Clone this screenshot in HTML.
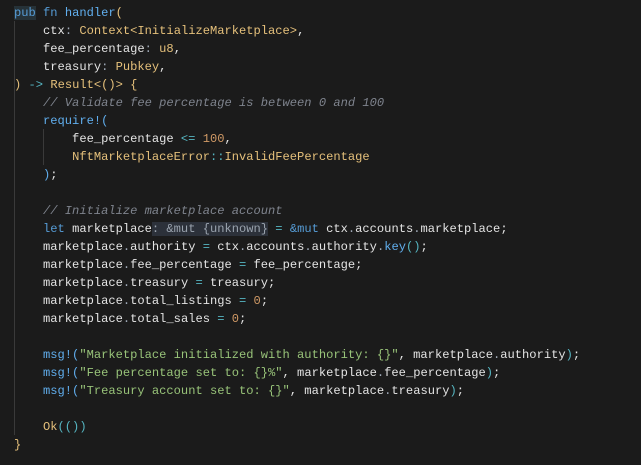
<!DOCTYPE html>
<html><head><meta charset="utf-8"><style>
html,body{margin:0;padding:0;background:#1b1b1b;width:641px;height:465px;overflow:hidden}
#code{position:absolute;left:14px;top:4px;font-family:"Liberation Mono",monospace;font-size:12.1px;color:#e4e4e4}
#code div{height:18px;line-height:18px;white-space:pre}
.k{color:#569cd6}.f{color:#61afef}.t{color:#e5c07b}.c{color:#7f848e;font-style:italic}
.s{color:#98c379}.n{color:#d19a66}.o{color:#56b6c2}.m{color:#61afef}.d{color:#a0aab8}
.h{background:#2c313a;color:#9aa3ae}.g{position:absolute;width:1px;background:#3a3a3a}
.pb{background:#263238}
</style></head><body>
<div class="g" style="left:14px;top:21px;height:414px"></div>
<div class="g" style="left:43px;top:129px;height:36px"></div>
<div id="code">
<div><span class="k pb">pub</span> <span class="k">fn</span> <span class="f">handler</span><span class="t">(</span></div>
<div>    ctx<span class="d">:</span> <span class="t">Context&lt;InitializeMarketplace&gt;</span>,</div>
<div>    fee_percentage<span class="d">:</span> <span class="t">u8</span>,</div>
<div>    treasury<span class="d">:</span> <span class="t">Pubkey</span>,</div>
<div><span class="t">)</span> <span class="o">-&gt;</span> <span class="t">Result&lt;()&gt; {</span></div>
<div>    <span class="c">// Validate fee percentage is between 0 and 100</span></div>
<div>    <span class="m">require!(</span></div>
<div>        fee_percentage <span class="o">&lt;=</span> <span class="n">100</span>,</div>
<div>        <span class="t">NftMarketplaceError</span><span class="o">::</span><span class="t">InvalidFeePercentage</span></div>
<div>    <span class="m">)</span>;</div>
<div> </div>
<div>    <span class="c">// Initialize marketplace account</span></div>
<div>    <span class="k">let</span> marketplace<span class="h">: &amp;mut {unknown}</span> <span class="o">=</span> <span class="k">&amp;mut</span> ctx<span class="d">.</span>accounts<span class="d">.</span>marketplace;</div>
<div>    marketplace<span class="d">.</span>authority <span class="o">=</span> ctx<span class="d">.</span>accounts<span class="d">.</span>authority<span class="d">.</span><span class="f">key</span><span class="o">()</span>;</div>
<div>    marketplace<span class="d">.</span>fee_percentage <span class="o">=</span> fee_percentage;</div>
<div>    marketplace<span class="d">.</span>treasury <span class="o">=</span> treasury;</div>
<div>    marketplace<span class="d">.</span>total_listings <span class="o">=</span> <span class="n">0</span>;</div>
<div>    marketplace<span class="d">.</span>total_sales <span class="o">=</span> <span class="n">0</span>;</div>
<div> </div>
<div>    <span class="m">msg!(</span><span class="s">"Marketplace initialized with authority: {}"</span>, marketplace<span class="d">.</span>authority<span class="o">)</span>;</div>
<div>    <span class="m">msg!(</span><span class="s">"Fee percentage set to: {}%"</span>, marketplace<span class="d">.</span>fee_percentage<span class="o">)</span>;</div>
<div>    <span class="m">msg!(</span><span class="s">"Treasury account set to: {}"</span>, marketplace<span class="d">.</span>treasury<span class="o">)</span>;</div>
<div> </div>
<div>    <span class="t">Ok</span><span class="o">(())</span></div>
<div><span class="t">}</span></div>
</div>
</body></html>
